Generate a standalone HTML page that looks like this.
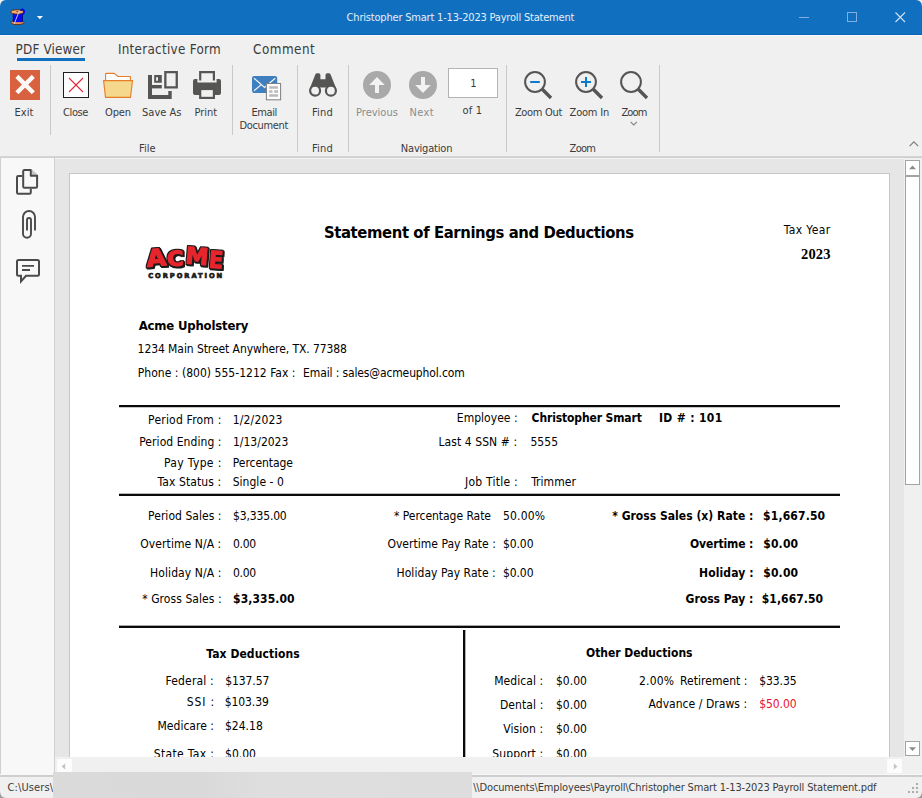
<!DOCTYPE html>
<html lang="en">
<head>
<meta charset="utf-8">
<title>Christopher Smart 1-13-2023 Payroll Statement</title>
<style>
*{box-sizing:border-box}
html,body{margin:0;padding:0}
body{width:922px;height:798px;overflow:hidden;position:relative;background:#f0f0f0;
 font-family:"DejaVu Sans Condensed","Liberation Sans",sans-serif;font-size:11px;color:#3b3b3b}
.abs{position:absolute}
.t{position:absolute;white-space:pre;line-height:1}
#titlebar{position:absolute;left:0;top:0;width:922px;height:35px;background:#106fbf;border-bottom:1px solid #0a64b9}
#ribbon{position:absolute;left:0;top:35px;width:922px;height:121px;background:#f0f0f0;border-top:1px solid #faf7f4}
#ribbonline{position:absolute;left:0;top:156px;width:922px;height:2px;background:linear-gradient(#d5d5d5 0,#d5d5d5 50%,#cdcdcd 50%,#cdcdcd 100%)}
.tabline{position:absolute;left:17px;top:58px;width:68px;height:3px;background:#106fbf}
.sep{position:absolute;width:1px;background:#c9c9c9;top:65px}
.sep.s{height:70px}.sep.l{height:87px}
#pagebox{position:absolute;left:448px;top:68px;width:50px;height:30px;background:#fff;border:1px solid #b4b4b4}
#navpanel{position:absolute;left:0;top:157px;width:55px;height:619px;background:#f8f8f8;border:1px solid #d0d0d0}
#viewer{position:absolute;left:55px;top:158px;width:849px;height:599px;background:#e6e6e6;overflow:hidden;color:#000}
#page{position:absolute;left:14px;top:15px;width:821px;height:700px;background:#fff;border:1px solid #c6c6c6}
.hr{position:absolute;left:64px;width:721px;height:2px;background:#0a0a0a}
#vbar{position:absolute;left:904px;top:158px;width:18px;height:599px;background:#f0f0f0}
.sbtn{position:absolute;background:#fff;border:1px solid #a3a3a3}
#hbar{position:absolute;left:55px;top:757px;width:849px;height:18px;background:#f0f0f0}
#status{position:absolute;left:0;top:775px;width:922px;height:23px;background:#f0f0f0;border-top:2px solid #cecece}
#redact{position:absolute;left:53px;top:772px;width:419px;height:26px;background:linear-gradient(90deg,#dadada 0%,#d9d9d9 35%,#dedede 50%,#dddddd 100%)}
svg{position:absolute;overflow:visible}
</style>
</head>
<body>
<div id="win">

<!-- ===== title bar ===== -->
<div id="titlebar">
 <svg style="left:9px;top:8px" width="18" height="18" viewBox="0 0 18 18">
  <ellipse cx="8.500" cy="14.500" rx="6.600" ry="2.100" fill="#ee9450" stroke="#5a2806" stroke-width="0.900"/>
  <rect x="4.300" y="4.600" width="9.200" height="9.600" fill="#0808ee"/>
  <path d="M4.300 5v9M13.500 5v9" stroke="#00067a" stroke-width="0.900"/>
  <ellipse cx="8.300" cy="3.900" rx="6.600" ry="2.200" fill="#f6ac70" stroke="#5a2806" stroke-width="0.900"/>
  <ellipse cx="8.600" cy="3.600" rx="1.700" ry="0.700" fill="#9a4a18"/>
  <path d="M11.500 2.600Q13.500 0.300 14.800 2.200T13.600 6.500" stroke="#0a0ae0" stroke-width="1.700" fill="none"/>
  <path d="M5.200 15.900L10.300 2.800" stroke="#dcdce6" stroke-width="0.900" fill="none"/>
 </svg>
 <svg style="left:36px;top:15px" width="8" height="5" viewBox="0 0 8 5"><path d="M0.8 0.9h6.2L3.9 4.2z" fill="#f4f8fc"/></svg>
 <!-- window buttons -->
 <svg style="left:795px;top:8px" width="120" height="20" viewBox="0 0 120 20">
  <path d="M4 9.5h10" stroke="#7fb0e0" stroke-width="1" fill="none"/>
  <rect x="52.5" y="4.5" width="9" height="9" stroke="#7fb0e0" stroke-width="1" fill="none"/>
  <path d="M100.5 4.5l9.5 9.5M110 4.5l-9.5 9.5" stroke="#cfe1f4" stroke-width="1.1" fill="none"/>
 </svg>
</div>

<!-- ===== ribbon ===== -->
<div id="ribbon"></div>
<div id="ribbonline"></div>
<div class="tabline"></div>
<div class="sep s" style="left:50px"></div>
<div class="sep s" style="left:232px"></div>
<div class="sep l" style="left:297px"></div>
<div class="sep l" style="left:348px"></div>
<div class="sep l" style="left:506px"></div>
<div class="sep l" style="left:659px"></div>
<div id="pagebox"></div>

<!-- Exit -->
<svg style="left:10px;top:70px" width="30" height="30" viewBox="0 0 30 30">
 <rect width="30" height="30" fill="#d8613f"/>
 <path d="M6.9 6.4L23.3 22.8M23.3 6.4L6.9 22.8" stroke="#fcf9f7" stroke-width="4.4" fill="none"/>
</svg>
<!-- Close -->
<svg style="left:63px;top:72px" width="26" height="26" viewBox="0 0 26 26">
 <rect x="0.5" y="0.5" width="25" height="25" fill="#fff" stroke="#1e1e1e" stroke-width="1"/>
 <path d="M6 6L20 20M20 6L6 20" stroke="#e8283e" stroke-width="1.150" fill="none"/>
</svg>
<!-- Open -->
<svg style="left:103px;top:72px" width="31" height="27" viewBox="0 0 31 27">
 <path d="M2.600 8.500V2.300Q2.600 1.400 3.500 1.400H11.200L15 4.500H27.400V8.500z" fill="#fefefe" stroke="#e87d28" stroke-width="1.100" stroke-linejoin="round"/>
 <path d="M0.600 8.600H29.500L27.500 25.400H2.500z" fill="#f5d88b" stroke="#e87d28" stroke-width="1.100"/>
</svg>
<!-- Save As -->
<svg style="left:148px;top:71px" width="30" height="28" viewBox="0 0 30 28" fill="#555554">
 <path d="M0 4h4v20h16.3v-3.9h3.4V28H0z"/>
 <path d="M6.2 4h7.6v7.7H6.2zM8.1 6.2v3.6h1.9V6.2z" fill-rule="evenodd"/>
 <rect x="4" y="14" width="9.8" height="3.4"/>
 <path d="M16.2 0h13.7v17.6H16.2zM18.5 2.3v13h9.1v-13z" fill-rule="evenodd"/>
</svg>
<!-- Print -->
<svg style="left:193px;top:71px" width="28" height="28" viewBox="0 0 28 28" fill="#555554">
 <path d="M6.1 0H22v9.6h-2.2V2.2H8.3v7.4H6.1z"/>
 <path d="M2 8.1h2.4v3.4h19.2V8.1H26Q28 8.100 28 10.1V22Q28 24 26 24H2Q0 24 0 22V10.1Q0 8.1 2 8.1z"/>
 <rect x="6.100" y="16.9" width="15.9" height="11.1"/>
 <rect x="8.300" y="19.1" width="11.5" height="6.700" fill="#f0f0f0"/>
</svg>
<!-- Email Document -->
<svg style="left:252px;top:75px" width="30" height="26" viewBox="0 0 30 26">
 <rect x="0" y="0.9" width="25.2" height="17.1" rx="2.2" fill="#3f7fbf"/>
 <path d="M2 3.3L12.600 12.500 23.200 3.300M2 15.800l7.600-6.400" stroke="#f2f6fa" stroke-width="1.2" fill="none"/>
 <rect x="14.400" y="8.500" width="14.200" height="16.300" fill="#fdfdfd" stroke="#7e7e7e" stroke-width="1"/>
 <path d="M17.200 11.200h8.800v2.500h-8.800zM17.200 15.200h3.300v2.500h-3.300zM22.200 15.200h3.800v2.500h-3.800zM17.200 19.200h8.800v2.500h-8.800z" fill="#b9b9b9"/>
</svg>
<!-- Find (binoculars) -->
<svg style="left:309px;top:73px" width="28" height="25" viewBox="0 0 28 25">
 <path d="M6.300 1.500Q6.700 0.200 8.300 0.200H9.600Q11.400 0.200 11.400 2V6.200H16.500V2Q16.500 0.200 18.300 0.200H19.600Q21.200 0.200 21.600 1.500L27 15 17 18V14.400H11V18L1 15z" fill="#555554"/>
 <circle cx="6.100" cy="17.700" r="5" fill="#f0f0f0" stroke="#555554" stroke-width="2.200"/>
 <circle cx="21.900" cy="17.700" r="5" fill="#f0f0f0" stroke="#555554" stroke-width="2.200"/>
</svg>
<!-- Previous / Next -->
<svg style="left:363px;top:71px" width="28" height="28" viewBox="0 0 28 28">
 <circle cx="14" cy="14" r="14" fill="#a9a9a9"/>
 <path d="M14 6L21.800 14H16v8h-4v-8H6.200z" fill="#f2f2f2"/>
</svg>
<svg style="left:409px;top:71px" width="28" height="28" viewBox="0 0 28 28">
 <circle cx="14" cy="14" r="14" fill="#a9a9a9"/>
 <path d="M14 22L21.800 14H16V6h-4v8H6.200z" fill="#f2f2f2"/>
</svg>
<!-- Zoom Out -->
<svg style="left:524px;top:71px" width="28" height="28" viewBox="0 0 28 28" fill="none">
 <circle cx="11" cy="11" r="9.900" stroke="#555554" stroke-width="2"/>
 <path d="M17.800 17.800L27 27" stroke="#555554" stroke-width="3.400"/>
 <path d="M6.200 11h9.600" stroke="#0e7aca" stroke-width="2"/>
</svg>
<!-- Zoom In -->
<svg style="left:575px;top:71px" width="28" height="28" viewBox="0 0 28 28" fill="none">
 <circle cx="11" cy="11" r="9.900" stroke="#555554" stroke-width="2"/>
 <path d="M17.800 17.800L27 27" stroke="#555554" stroke-width="3.400"/>
 <path d="M6 11h10M11 6v10" stroke="#0e7aca" stroke-width="2"/>
</svg>
<!-- Zoom -->
<svg style="left:620px;top:71px" width="28" height="28" viewBox="0 0 28 28" fill="none">
 <circle cx="11" cy="11" r="9.900" stroke="#555554" stroke-width="2"/>
 <path d="M17.800 17.800L27 27" stroke="#555554" stroke-width="3.400"/>
</svg>
<svg style="left:630px;top:121px" width="8" height="5" viewBox="0 0 8 5"><path d="M0.600 0.800L3.800 4 7 0.800" stroke="#858585" stroke-width="1.100" fill="none"/></svg>
<!-- ribbon collapse -->
<svg style="left:909px;top:141px" width="10" height="6" viewBox="0 0 10 6"><path d="M0.600 5.200L4.900 0.900 9.200 5.200" stroke="#7a7a7a" stroke-width="1.100" fill="none"/></svg>


<!-- ===== navigation (left) panel ===== -->
<div id="navpanel"></div>
<svg style="left:15px;top:168px" width="26" height="28" viewBox="0 0 26 28" fill="none" stroke="#4a4a4a" stroke-width="2" stroke-linejoin="round">
 <path d="M16.800 1.300L23 7H16.800z" fill="#c6c6c6" stroke="none"/>
 <path d="M7.200 8H3.200Q2 8 2 9.200V24.600Q2 25.800 3.200 25.800H14.600Q15.800 25.800 15.800 24.600V20.800"/>
 <path d="M8.200 3.200Q8.200 2 9.400 2H15.800V7.800H22.100V18.600Q22.100 19.800 20.900 19.800H9.400Q8.200 19.800 8.200 18.600z"/>
</svg>
<svg style="left:21px;top:210px" width="16" height="30" viewBox="0 0 16 30" fill="none" stroke="#4a4a4a" stroke-width="1.900">
 <path d="M14 20.600V7A6 6 0 0 0 2 7V23.800A4 4 0 0 0 10 23.800V10A2 2 0 0 0 6 10V20.600"/>
</svg>
<svg style="left:15px;top:258px" width="27" height="26" viewBox="0 0 27 26" fill="none" stroke="#4a4a4a" stroke-width="2" stroke-linejoin="miter">
 <path d="M3.500 2H22.500Q24 2 24 3.500V16.300Q24 17.800 22.500 17.800H11L6 23.400V17.800H3.500Q2 17.800 2 16.300V3.500Q2 2 3.500 2z"/>
 <path d="M7 7.900H19M7 12H15" stroke-width="1.900"/>
</svg>


<!-- ===== pdf viewer ===== -->
<div id="viewer">
 <div id="page"></div>
 <div class="hr" style="top:247px;box-shadow:0 1px 0 rgba(0,0,0,.22)"></div>
 <div class="hr" style="top:336px;box-shadow:0 -1px 0 rgba(0,0,0,.28)"></div>
 <div class="hr" style="top:468px;box-shadow:0 -1px 0 rgba(0,0,0,.35)"></div>
 <div class="abs" style="left:408px;top:472px;width:2px;height:140px;background:#0a0a0a;box-shadow:1px 0 0 rgba(0,0,0,.3)"></div>
<svg style="left:88px;top:86px" width="86" height="40" viewBox="0 0 86 40">
 <defs>
  <filter id="toon" x="-10%" y="-20%" width="120%" height="140%" color-interpolation-filters="sRGB">
   <feMorphology in="SourceAlpha" operator="dilate" radius="1" result="o"/>
   <feOffset in="o" dx="0.800" dy="0.800" result="o2"/>
   <feFlood flood-color="#1a1a1a"/><feComposite in2="o2" operator="in" result="outline"/>
   <feFlood flood-color="#1a1a1a"/><feComposite in2="o" operator="in" result="outline0"/>
   <feMerge><feMergeNode in="outline"/><feMergeNode in="outline0"/><feMergeNode in="SourceGraphic"/></feMerge>
  </filter>
 </defs>
 <g filter="url(#toon)" font-family="'DejaVu Sans','Liberation Sans',sans-serif" font-weight="700" fill="#e6262c" stroke="#e6262c" stroke-width="1.300" stroke-linejoin="round">
  <text x="3.600" y="22" font-size="23.500" textLength="19.500" lengthAdjust="spacingAndGlyphs" transform="rotate(-5 13.500 13.500)">A</text>
  <text x="24" y="21.800" font-size="20.500" textLength="16.600" lengthAdjust="spacingAndGlyphs" transform="rotate(-2 32 15)">C</text>
  <text x="42.600" y="20.300" font-size="23" textLength="22.800" lengthAdjust="spacingAndGlyphs" transform="rotate(5 54 12)">M</text>
  <text x="66" y="24" font-size="23.500" textLength="14.200" lengthAdjust="spacingAndGlyphs" transform="rotate(4 73 15.500)">E</text>
 </g>
 <text x="5.200" y="33.900" font-family="'DejaVu Sans','Liberation Sans',sans-serif" font-weight="700" font-size="6.700" fill="#1a1a1a" stroke="#1a1a1a" stroke-width="0.700" textLength="74" lengthAdjust="spacing">CORPORATION</text>
</svg>

<span class="t" style='left:269.0px;top:66.6px;font-size:16.5px;letter-spacing:-0.400px;font-weight:700;'>Statement of Earnings and Deductions</span>
<span class="t" style='left:728.7px;top:65.8px;font-size:12px;letter-spacing:0.391px;'>Tax Year</span>
<span class="t" style='left:746.0px;top:88.6px;font-size:14.5px;letter-spacing:0.167px;font-weight:700;font-family:"Liberation Serif",serif;'>2023</span>
<span class="t" style='left:83.7px;top:160.5px;font-size:13px;letter-spacing:-0.180px;font-weight:700;'>Acme Upholstery</span>
<span class="t" style='left:82.6px;top:185.1px;font-size:12px;letter-spacing:-0.077px;'>1234 Main Street Anywhere, TX. 77388</span>
<span class="t" style='left:82.8px;top:208.9px;font-size:12px;letter-spacing:0.027px;'>Phone : (800) 555-1212 Fax :</span>
<span class="t" style='left:248.1px;top:208.9px;font-size:12px;letter-spacing:-0.135px;'>Email : sales@acmeuphol.com</span>
<span class="t" style='left:93.1px;top:255.6px;font-size:12px;letter-spacing:0.208px;'>Period From :</span>
<span class="t" style='left:177.8px;top:255.6px;font-size:12px;letter-spacing:0.146px;'>1/2/2023</span>
<span class="t" style='left:84.2px;top:277.9px;font-size:12px;letter-spacing:0.070px;'>Period Ending :</span>
<span class="t" style='left:178.0px;top:277.9px;font-size:12px;letter-spacing:0.000px;'>1/13/2023</span>
<span class="t" style='left:109.0px;top:299.2px;font-size:12px;letter-spacing:0.358px;'>Pay Type :</span>
<span class="t" style='left:177.8px;top:299.2px;font-size:12px;letter-spacing:-0.056px;'>Percentage</span>
<span class="t" style='left:102.5px;top:318.0px;font-size:12px;letter-spacing:0.111px;'>Tax Status :</span>
<span class="t" style='left:177.7px;top:318.0px;font-size:12px;letter-spacing:0.027px;'>Single - 0</span>
<span class="t" style='left:401.8px;top:254.0px;font-size:12px;letter-spacing:0.033px;'>Employee :</span>
<span class="t" style='left:476.6px;top:254.0px;font-size:12px;letter-spacing:-0.126px;font-weight:700;'>Christopher Smart</span>
<span class="t" style='left:604.0px;top:254.0px;font-size:12px;letter-spacing:0.333px;font-weight:700;'>ID # : 101</span>
<span class="t" style='left:383.5px;top:277.9px;font-size:12px;letter-spacing:0.077px;'>Last 4 SSN # :</span>
<span class="t" style='left:475.4px;top:277.9px;font-size:12px;letter-spacing:0.093px;'>5555</span>
<span class="t" style='left:410.1px;top:318.0px;font-size:12px;letter-spacing:0.222px;'>Job Title :</span>
<span class="t" style='left:476.2px;top:318.0px;font-size:12px;letter-spacing:0.050px;'>Trimmer</span>
<span class="t" style='left:93.1px;top:352.0px;font-size:12px;letter-spacing:0.038px;'>Period Sales :</span>
<span class="t" style='left:178.1px;top:352.0px;font-size:12px;letter-spacing:-0.160px;'>$3,335.00</span>
<span class="t" style='left:85.3px;top:380.1px;font-size:12px;letter-spacing:0.077px;'>Overtime N/A :</span>
<span class="t" style='left:178.0px;top:380.1px;font-size:12px;letter-spacing:-0.333px;'>0.00</span>
<span class="t" style='left:95.0px;top:409.0px;font-size:12px;letter-spacing:0.102px;'>Holiday N/A :</span>
<span class="t" style='left:178.0px;top:409.0px;font-size:12px;letter-spacing:-0.333px;'>0.00</span>
<span class="t" style='left:87.2px;top:434.8px;font-size:12px;letter-spacing:0.070px;'>* Gross Sales :</span>
<span class="t" style='left:178.1px;top:434.8px;font-size:12px;letter-spacing:0.090px;font-weight:700;'>$3,335.00</span>
<span class="t" style='left:339.1px;top:352.0px;font-size:12px;letter-spacing:-0.049px;'>* Percentage Rate</span>
<span class="t" style='left:447.9px;top:352.0px;font-size:12px;letter-spacing:0.204px;'>50.00%</span>
<span class="t" style='left:332.4px;top:380.1px;font-size:12px;letter-spacing:0.029px;'>Overtime Pay Rate :</span>
<span class="t" style='left:447.9px;top:380.1px;font-size:12px;letter-spacing:-0.065px;'>$0.00</span>
<span class="t" style='left:341.5px;top:409.0px;font-size:12px;letter-spacing:0.059px;'>Holiday Pay Rate :</span>
<span class="t" style='left:447.9px;top:409.0px;font-size:12px;letter-spacing:-0.065px;'>$0.00</span>
<span class="t" style='left:557.2px;top:351.8px;font-size:12px;letter-spacing:0.023px;font-weight:700;'>* Gross Sales (x) Rate :</span>
<span class="t" style='left:708.1px;top:351.8px;font-size:12px;letter-spacing:0.155px;font-weight:700;'>$1,667.50</span>
<span class="t" style='left:635.0px;top:379.7px;font-size:12px;letter-spacing:-0.116px;font-weight:700;'>Overtime :</span>
<span class="t" style='left:708.2px;top:379.7px;font-size:12px;letter-spacing:0.190px;font-weight:700;'>$0.00</span>
<span class="t" style='left:644.1px;top:408.8px;font-size:12px;letter-spacing:0.097px;font-weight:700;'>Holiday :</span>
<span class="t" style='left:708.2px;top:408.8px;font-size:12px;letter-spacing:0.190px;font-weight:700;'>$0.00</span>
<span class="t" style='left:630.6px;top:435.0px;font-size:12px;letter-spacing:-0.022px;font-weight:700;'>Gross Pay :</span>
<span class="t" style='left:706.8px;top:435.0px;font-size:12px;letter-spacing:0.057px;font-weight:700;'>$1,667.50</span>
<span class="t" style='left:151.3px;top:489.6px;font-size:12px;letter-spacing:0.078px;font-weight:700;'>Tax Deductions</span>
<span class="t" style='left:110.6px;top:516.6px;font-size:12px;letter-spacing:0.155px;'>Federal :</span>
<span class="t" style='left:170.2px;top:516.6px;font-size:12px;letter-spacing:-0.087px;'>$137.57</span>
<span class="t" style='left:131.8px;top:538.0px;font-size:12px;letter-spacing:0.815px;'>SSI :</span>
<span class="t" style='left:169.7px;top:538.0px;font-size:12px;letter-spacing:-0.087px;'>$103.39</span>
<span class="t" style='left:102.5px;top:561.8px;font-size:12px;letter-spacing:0.024px;'>Medicare :</span>
<span class="t" style='left:170.0px;top:561.8px;font-size:12px;letter-spacing:-0.004px;'>$24.18</span>
<span class="t" style='left:98.7px;top:589.8px;font-size:12px;letter-spacing:0.352px;'>State Tax :</span>
<span class="t" style='left:170.1px;top:589.8px;font-size:12px;letter-spacing:-0.010px;'>$0.00</span>
<span class="t" style='left:531.0px;top:488.8px;font-size:12px;letter-spacing:-0.031px;font-weight:700;'>Other Deductions</span>
<span class="t" style='left:439.2px;top:516.6px;font-size:12px;letter-spacing:0.058px;'>Medical :</span>
<span class="t" style='left:501.0px;top:516.6px;font-size:12px;letter-spacing:0.000px;'>$0.00</span>
<span class="t" style='left:444.9px;top:540.5px;font-size:12px;letter-spacing:0.109px;'>Dental :</span>
<span class="t" style='left:501.0px;top:540.5px;font-size:12px;letter-spacing:0.000px;'>$0.00</span>
<span class="t" style='left:448.3px;top:564.8px;font-size:12px;letter-spacing:0.069px;'>Vision :</span>
<span class="t" style='left:501.0px;top:564.8px;font-size:12px;letter-spacing:0.000px;'>$0.00</span>
<span class="t" style='left:437.2px;top:589.8px;font-size:12px;letter-spacing:0.158px;'>Support :</span>
<span class="t" style='left:501.0px;top:589.8px;font-size:12px;letter-spacing:0.000px;'>$0.00</span>
<span class="t" style='left:584.0px;top:516.6px;font-size:12px;letter-spacing:0.185px;'>2.00%</span>
<span class="t" style='left:625.0px;top:516.6px;font-size:12px;letter-spacing:0.047px;'>Retirement :</span>
<span class="t" style='left:704.3px;top:516.6px;font-size:12px;letter-spacing:-0.104px;'>$33.35</span>
<span class="t" style='left:593.5px;top:539.7px;font-size:12px;letter-spacing:0.049px;'>Advance / Draws :</span>
<span class="t" style='left:704.3px;top:539.7px;font-size:12px;letter-spacing:-0.104px;color:#e8112d;'>$50.00</span>
</div>

<!-- ===== scrollbars ===== -->
<div class="abs" style="left:55px;top:158px;width:867px;height:1px;background:#f6f6f6"></div>
<div id="vbar"></div>
<div class="sbtn" style="left:905px;top:160px;width:15px;height:16px"></div>
<div class="sbtn" style="left:905px;top:176px;width:15px;height:309px"></div>
<div class="sbtn" style="left:905px;top:741px;width:15px;height:15px"></div>
<svg style="left:909px;top:165px" width="8" height="5" viewBox="0 0 8 5"><path d="M3.5 0.6L7 4.2H0z" fill="#8a8a8a"/></svg>
<svg style="left:909px;top:747px" width="8" height="5" viewBox="0 0 8 5"><path d="M0 0.3h7L3.5 3.9z" fill="#8a8a8a"/></svg>
<div id="hbar"></div>
<div class="abs" style="left:57px;top:759px;width:15px;height:14px;background:#fcfcfc"></div>
<div class="abs" style="left:887px;top:759px;width:15px;height:14px;background:#fcfcfc"></div>
<svg style="left:61px;top:762.5px" width="5" height="7" viewBox="0 0 5 7"><path d="M4.2 0.2v6.4L0.6 3.4z" fill="#c4c4c4"/></svg>
<svg style="left:893px;top:762.5px" width="5" height="7" viewBox="0 0 5 7"><path d="M0.8 0.2v6.4L4.4 3.4z" fill="#c4c4c4"/></svg>

<!-- ===== status bar ===== -->
<div class="abs" style="left:0;top:774px;width:922px;height:1px;background:#f8f8f8"></div>
<div id="status"></div>
<svg style="left:908px;top:783px" width="12" height="12" viewBox="0 0 12 12" fill="#ababab">
 <rect x="8" y="0" width="2" height="2"/><rect x="4" y="4" width="2" height="2"/><rect x="8" y="4" width="2" height="2"/>
 <rect x="0" y="8" width="2" height="2"/><rect x="4" y="8" width="2" height="2"/><rect x="8" y="8" width="2" height="2"/>
</svg>
<svg style="left:0;top:0" width="7" height="7" viewBox="0 0 7 7"><path d="M0 0h6Q0.300 0.300 0 6.500z" fill="#f2f0ec"/></svg>
<svg style="left:915px;top:0" width="7" height="7" viewBox="0 0 7 7"><path d="M7 0H1Q6.700 0.300 7 6.500z" fill="#f4ecd8"/></svg>
<svg style="left:0;top:791px" width="7" height="7" viewBox="0 0 7 7"><path d="M0 7h6Q0.300 6.700 0 0.500z" fill="#9c9c9c"/></svg>
<svg style="left:915px;top:791px" width="7" height="7" viewBox="0 0 7 7"><path d="M7 7H1Q6.700 6.700 7 0.500z" fill="#9c9c9c"/></svg>
<span class="t" style='left:346.6px;top:12.4px;font-size:11px;letter-spacing:-0.194px;color:#e6f0fa;'>Christopher Smart 1-13-2023 Payroll Statement</span>
<span class="t" style='left:15.6px;top:43.0px;font-size:13.33px;letter-spacing:0.169px;'>PDF Viewer</span>
<span class="t" style='left:117.9px;top:43.0px;font-size:13.33px;letter-spacing:0.285px;'>Interactive Form</span>
<span class="t" style='left:253.0px;top:43.0px;font-size:13.33px;letter-spacing:0.507px;'>Comment</span>
<span class="t" style='left:14.4px;top:107.2px;font-size:11px;letter-spacing:0.093px;'>Exit</span>
<span class="t" style='left:63.0px;top:107.2px;font-size:11px;letter-spacing:-0.375px;'>Close</span>
<span class="t" style='left:105.1px;top:107.2px;font-size:11px;letter-spacing:-0.167px;'>Open</span>
<span class="t" style='left:142.1px;top:107.2px;font-size:11px;letter-spacing:-0.003px;'>Save As</span>
<span class="t" style='left:194.5px;top:107.2px;font-size:11px;letter-spacing:0.000px;'>Print</span>
<span class="t" style='left:251.5px;top:107.2px;font-size:11px;letter-spacing:-0.430px;'>Email</span>
<span class="t" style='left:239.4px;top:119.7px;font-size:11px;letter-spacing:-0.323px;'>Document</span>
<span class="t" style='left:311.9px;top:107.2px;font-size:11px;letter-spacing:0.260px;'>Find</span>
<span class="t" style='left:356.1px;top:107.2px;font-size:11px;letter-spacing:-0.006px;color:#8c8c8c;'>Previous</span>
<span class="t" style='left:409.5px;top:107.2px;font-size:11px;letter-spacing:0.333px;color:#8c8c8c;'>Next</span>
<span class="t" style='left:470.2px;top:77.9px;font-size:11px;letter-spacing:0.000px;'>1</span>
<span class="t" style='left:462.5px;top:104.7px;font-size:11px;letter-spacing:0.160px;'>of 1</span>
<span class="t" style='left:514.9px;top:107.2px;font-size:11px;letter-spacing:-0.317px;'>Zoom Out</span>
<span class="t" style='left:569.6px;top:107.2px;font-size:11px;letter-spacing:-0.207px;'>Zoom In</span>
<span class="t" style='left:621.4px;top:107.2px;font-size:11px;letter-spacing:-0.840px;'>Zoom</span>
<span class="t" style='left:139.1px;top:142.8px;font-size:11px;letter-spacing:-0.013px;'>File</span>
<span class="t" style='left:311.9px;top:142.8px;font-size:11px;letter-spacing:0.260px;'>Find</span>
<span class="t" style='left:400.8px;top:142.8px;font-size:11px;letter-spacing:-0.193px;'>Navigation</span>
<span class="t" style='left:569.6px;top:142.8px;font-size:11px;letter-spacing:-0.747px;'>Zoom</span>
<span class="t" style='left:7.5px;top:782.2px;font-size:11px;letter-spacing:0.125px;'>C:\Users\</span>
<span class="t" style='left:473.2px;top:782.2px;font-size:11px;letter-spacing:-0.157px;'>\\Documents\Employees\Payroll\Christopher Smart 1-13-2023 Payroll Statement.pdf</span>
<div id="redact"></div>
</div>
</body>
</html>
